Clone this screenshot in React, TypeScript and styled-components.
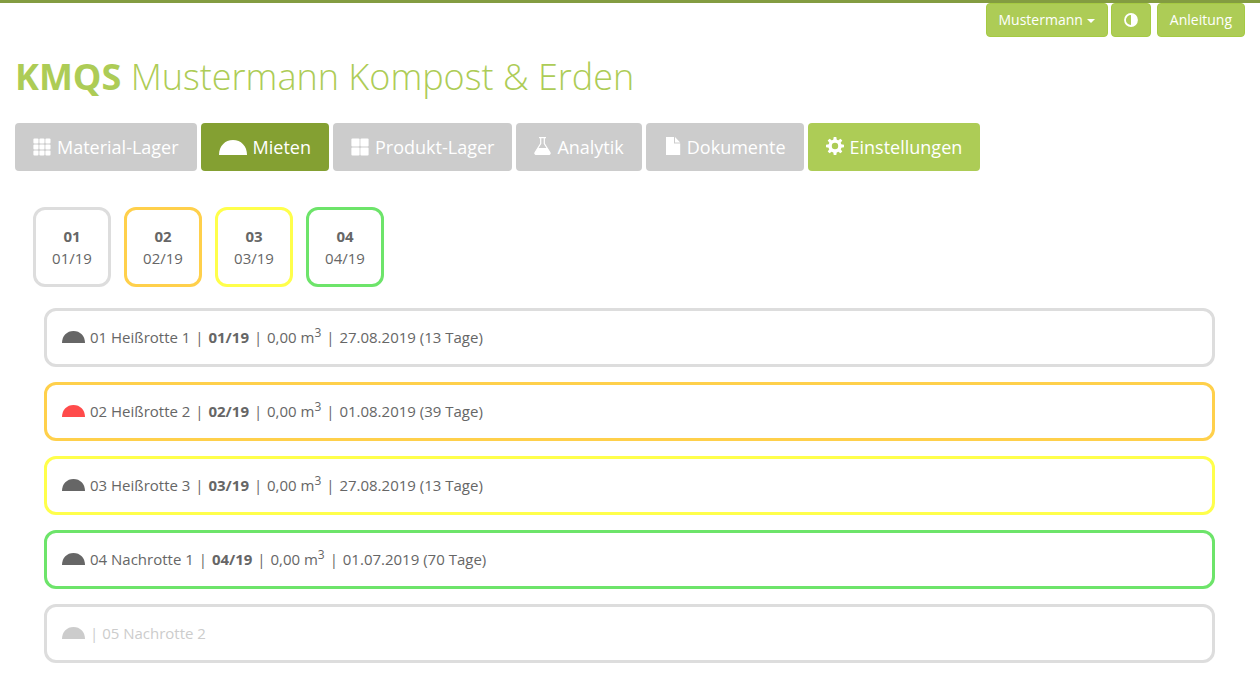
import React from "react";
import styled, { createGlobalStyle } from "styled-components";

const GlobalStyle = createGlobalStyle`
  *, *::before, *::after { box-sizing: border-box; }
  body {
    margin: 0;
    background: #fff;
    color: #666;
    font-family: "Open Sans", "Noto Sans", sans-serif;
    font-size: 15px;
    line-height: 22px;
  }
`;

const Page = styled.div`
  border-top: 3px solid #839c41;
  padding: 0 15px 16px;
`;

const UserBar = styled.div`
  display: flex;
  justify-content: flex-end;
  gap: 3px;
`;

const SmallButton = styled.button<{ $spaced?: boolean }>`
  display: flex;
  align-items: center;
  justify-content: center;
  gap: 4px;
  height: 34px;
  min-width: 40px;
  margin: 0 0 0 ${(p) => (p.$spaced ? "3px" : "0")};
  padding: 0 12px;
  border: 1px solid #a5ca42;
  border-radius: 4px;
  background: #adcc56;
  color: #fff;
  font: 14px/20px "Open Sans", sans-serif;
  cursor: pointer;
`;

const Caret = styled.span`
  margin-top: 2px;
  border: 4px solid transparent;
  border-top-color: #fff;
  border-bottom: 0;
`;

const Title = styled.h1`
  margin: 20px 0 26px;
  color: #adcc56;
  font-size: 36px;
  line-height: 40px;
  font-weight: 300;

  strong { font-weight: 700; }
`;

const Nav = styled.nav`
  display: flex;
  flex-wrap: wrap;
  gap: 4px;
`;

const tones = { muted: "#cccccc", active: "#84a032", accent: "#adcc56" };

const NavLink = styled.a<{ $tone: keyof typeof tones }>`
  display: flex;
  align-items: center;
  gap: 6px;
  height: 48px;
  padding: 0 18px;
  border-radius: 4px;
  background: ${(p) => tones[p.$tone]};
  color: #fff;
  font-size: 18px;
  line-height: 24px;
  text-decoration: none;
`;

const Tiles = styled.div`
  display: flex;
  flex-wrap: wrap;
  gap: 13px;
  margin: 36px 18px 0;
`;

const Tile = styled.a<{ $color: string }>`
  display: flex;
  flex-direction: column;
  align-items: center;
  justify-content: center;
  width: 78px;
  height: 80px;
  border: 3px solid ${(p) => p.$color};
  border-radius: 12px;
  color: #666;
  text-decoration: none;
`;

const Rows = styled.div`
  display: flex;
  flex-direction: column;
  gap: 15px;
  margin: 21px 30px 0 29px;
`;

const Row = styled.button<{ $color: string; $empty?: boolean }>`
  display: flex;
  align-items: center;
  gap: 5px;
  width: 100%;
  height: 59px;
  padding: 0 15px 2px;
  border: 3px solid ${(p) => p.$color};
  border-radius: 12px;
  background: #fff;
  color: ${(p) => (p.$empty ? "#ccc" : "#666")};
  font: 15px/22px "Open Sans", sans-serif;
  text-align: left;
  cursor: pointer;

  sup {
    position: relative;
    top: -6px;
    font-size: 12px;
    line-height: 0;
    vertical-align: baseline;
  }
`;

const Separator = styled.span`
  margin: 0 1px;
`;

const Mound = ({ width, height, color = "currentColor" }: { width: number; height: number; color?: string }) => (
  <svg width={width} height={height} viewBox="0 0 28 15" preserveAspectRatio="none" aria-hidden="true">
    <path d="M0 15C0 6 6 0 14 0S28 6 28 15Z" fill={color} />
  </svg>
);

const GridIcon = () => (
  <svg width="18" height="18" viewBox="0 0 18 18" fill="currentColor" aria-hidden="true">
    {[0, 6, 12].map((y) => [0, 6, 12].map((x) => (
      <rect key={`${x}-${y}`} x={x + 0.4} y={y + 0.4} width="5.1" height="5.1" rx="1" />
    )))}
  </svg>
);

const LargeGridIcon = () => (
  <svg width="18" height="18" viewBox="0 0 18 18" fill="currentColor" aria-hidden="true">
    {[0.4, 9.4].map((y) => [0.4, 9.4].map((x) => (
      <rect key={`${x}-${y}`} x={x} y={y} width="8.2" height="8.2" rx="1" />
    )))}
  </svg>
);

const FlaskIcon = () => (
  <svg width="17" height="20" viewBox="0.5 1 17 20" aria-hidden="true">
    <path d="M5.5 1.6H12.5M7.2 1.6V7.5L1.6 16.5Q.8 18.4 3 18.4H15Q17.2 18.4 16.4 16.5L10.8 7.5V1.6" fill="none" stroke="currentColor" strokeWidth="1.2" />
    <path d="M4.3 12H13.7L16.8 17Q17 19 15 19H3Q1 19 1.2 17Z" fill="currentColor" />
  </svg>
);

const FileIcon = () => (
  <svg width="17" height="20" viewBox="0 1 17 20" fill="currentColor" aria-hidden="true">
    <path d="M2 1H10V7.5H16.2V19H2Z" />
    <path d="M11 1L16.2 6.5H11Z" />
  </svg>
);

const GearIcon = () => (
  <svg width="18" height="20" viewBox="0 0 18 20" aria-hidden="true">
    <circle cx="9" cy="9" r="4.9" fill="none" stroke="currentColor" strokeWidth="3.4" />
    {[0, 45, 90, 135, 180, 225, 270, 315].map((a) => (
      <path key={a} d="M7.2 3L7.7 0H10.3L10.8 3Z" fill="currentColor" transform={`rotate(${a} 9 9)`} />
    ))}
  </svg>
);

const ContrastIcon = () => (
  <svg width="14" height="14" viewBox="0 0 14 14" aria-hidden="true">
    <circle cx="7" cy="7" r="6" fill="none" stroke="currentColor" strokeWidth="1.8" />
    <path d="M7 1A6 6 0 0 1 7 13Z" fill="currentColor" />
  </svg>
);

const GREY = "#dddddd";
const ORANGE = "#ffd04b";
const YELLOW = "#ffff4b";
const GREEN = "#6de46a";

const tiles = [
  { no: "01", batch: "01/19", color: GREY },
  { no: "02", batch: "02/19", color: ORANGE },
  { no: "03", batch: "03/19", color: YELLOW },
  { no: "04", batch: "04/19", color: GREEN },
];

const rows = [
  { name: "01 Heißrotte 1", batch: "01/19", date: "27.08.2019 (13 Tage)", color: GREY },
  { name: "02 Heißrotte 2", batch: "02/19", date: "01.08.2019 (39 Tage)", color: ORANGE, mound: "#ff4b4b" },
  { name: "03 Heißrotte 3", batch: "03/19", date: "27.08.2019 (13 Tage)", color: YELLOW },
  { name: "04 Nachrotte 1", batch: "04/19", date: "01.07.2019 (70 Tage)", color: GREEN },
];

export default function App() {
  return (
    <>
      <GlobalStyle />
      <Page>
        <UserBar>
          <SmallButton type="button">Mustermann<Caret /></SmallButton>
          <SmallButton type="button" aria-label="Kontrast"><ContrastIcon /></SmallButton>
          <SmallButton type="button" $spaced>Anleitung</SmallButton>
        </UserBar>
        <Title><strong>KMQS</strong> Mustermann Kompost &amp; Erden</Title>
        <Nav>
          <NavLink href="#material" $tone="muted"><GridIcon />Material-Lager</NavLink>
          <NavLink href="#mieten" $tone="active"><Mound width={28} height={15} />Mieten</NavLink>
          <NavLink href="#produkt" $tone="muted"><LargeGridIcon />Produkt-Lager</NavLink>
          <NavLink href="#analytik" $tone="muted"><FlaskIcon />Analytik</NavLink>
          <NavLink href="#dokumente" $tone="muted"><FileIcon />Dokumente</NavLink>
          <NavLink href="#einstellungen" $tone="accent"><GearIcon />Einstellungen</NavLink>
        </Nav>
        <Tiles>
          {tiles.map((t) => (
            <Tile key={t.no} href={`#miete-${t.no}`} $color={t.color}>
              <strong>{t.no}</strong>
              <span>{t.batch}</span>
            </Tile>
          ))}
        </Tiles>
        <Rows>
          {rows.map((r) => (
            <Row key={r.name} type="button" $color={r.color}>
              <Mound width={23} height={12} color={r.mound} />
              <span>
                {r.name} <Separator>|</Separator> <strong>{r.batch}</strong> <Separator>|</Separator> 0,00 m<sup>3</sup>{" "}
                <Separator>|</Separator> {r.date}
              </span>
            </Row>
          ))}
          <Row type="button" $color={GREY} $empty>
            <Mound width={23} height={12} />
            <span>| 05 Nachrotte 2</span>
          </Row>
        </Rows>
      </Page>
    </>
  );
}
